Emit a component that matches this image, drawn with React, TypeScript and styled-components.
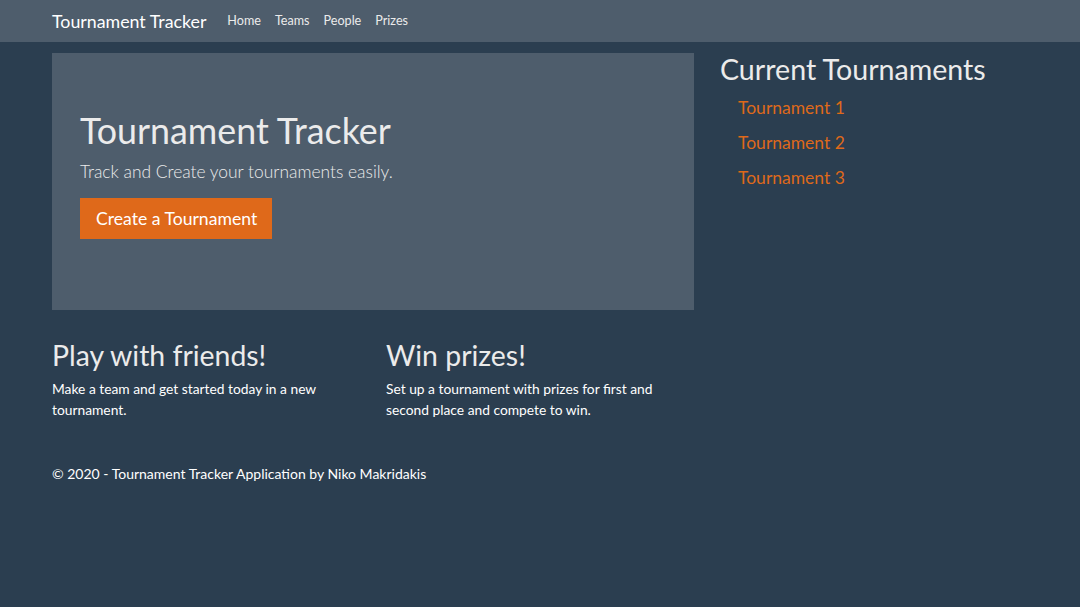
import React from 'react';
import styled, { createGlobalStyle } from 'styled-components';

const GlobalStyle = createGlobalStyle`
  html, body {
    margin: 0;
    padding: 0;
    background: #2b3e50;
    color: #ebebeb;
    font-family: Lato, "Liberation Sans", sans-serif;
    font-size: 14px;
    line-height: 1.5;
  }
  * { box-sizing: border-box; }
`;

const tournaments = ['Tournament 1', 'Tournament 2', 'Tournament 3'];

function App() {
  return (
    <>
      <GlobalStyle />
      <Navbar>
        <NavInner>
          <Brand href="#">Tournament Tracker</Brand>
          <NavLinks>
            <NavLink href="#">Home</NavLink>
            <NavLink href="#">Teams</NavLink>
            <NavLink href="#">People</NavLink>
            <NavLink href="#">Prizes</NavLink>
          </NavLinks>
        </NavInner>
      </Navbar>
      <Container>
        <TopRow>
          <Jumbotron>
            <JumboTitle>Tournament Tracker</JumboTitle>
            <Lead>Track and Create your tournaments easily.</Lead>
            <PrimaryButton>Create a Tournament</PrimaryButton>
          </Jumbotron>
          <Sidebar>
            <SideTitle>Current Tournaments</SideTitle>
            <TourList>
              {tournaments.map((t) => (
                <li key={t}>
                  <TourLink href="#">{t}</TourLink>
                </li>
              ))}
            </TourList>
          </Sidebar>
        </TopRow>
        <FeatureRow>
          <Feature>
            <FeatureTitle>Play with friends!</FeatureTitle>
            <FeatureText>Make a team and get started today in a new tournament.</FeatureText>
          </Feature>
          <Feature>
            <FeatureTitle>Win prizes!</FeatureTitle>
            <FeatureText>Set up a tournament with prizes for first and second place and compete to win.</FeatureText>
          </Feature>
          <Feature />
        </FeatureRow>
        <Footer>© 2020 - Tournament Tracker Application by Niko Makridakis</Footer>
      </Container>
    </>
  );
}

export default App;

const Navbar = styled.nav`
  background: #4e5d6c;
  height: 42px;
`;

const NavInner = styled.div`
  width: 976px;
  margin: 0 auto;
  height: 100%;
  display: flex;
  align-items: center;
`;

const Brand = styled.a`
  color: #fff;
  font-size: 17.8px;
  text-decoration: none;
  margin-right: 21px;
`;

const NavLinks = styled.div`
  display: flex;
  gap: 14px;
`;

const NavLink = styled.a`
  color: #ebebeb;
  font-size: 12.6px;
  text-decoration: none;
`;

const Container = styled.div`
  width: 976px;
  margin: 0 auto;
  padding-top: 11px;
`;

const TopRow = styled.div`
  display: flex;
`;

const Jumbotron = styled.div`
  width: 642px;
  height: 257px;
  background: #4e5d6c;
  padding: 58px 28px;
`;

const JumboTitle = styled.h1`
  margin: 0;
  font-size: 35.8px;
  font-weight: 400;
  line-height: 1.1;
  color: #ebebeb;
`;

const Lead = styled.p`
  margin: 9px 0 13px;
  font-size: 17.4px;
  font-weight: 300;
  color: #ebebeb;
`;

const PrimaryButton = styled.button`
  background: #df691a;
  border: none;
  border-radius: 0;
  color: #fff;
  font-family: inherit;
  font-size: 17.6px;
  height: 41px;
  padding: 0 15px 0 16px;
`;

const Sidebar = styled.div`
  margin-left: 26px;
`;

const SideTitle = styled.h2`
  margin: 1px 0 0;
  font-size: 28.6px;
  font-weight: 400;
  line-height: 1.1;
  color: #ebebeb;
`;

const TourList = styled.ul`
  list-style: none;
  margin: 6px 0 0;
  padding-left: 18px;

  li {
    font-size: 17.5px;
    line-height: 34.6px;
  }
`;

const TourLink = styled.a`
  color: #df691a;
  text-decoration: none;
`;

const FeatureRow = styled.div`
  display: grid;
  grid-template-columns: repeat(3, 1fr);
  gap: 30px;
  width: 972px;
  margin-top: 30px;
`;

const Feature = styled.div`
  min-width: 0;
`;

const FeatureTitle = styled.h3`
  margin: 0 0 7px;
  font-size: 28.4px;
  font-weight: 400;
  line-height: 1.1;
  color: #ebebeb;
`;

const FeatureText = styled.p`
  margin: 0;
  font-size: 13.8px;
  line-height: 21px;
  color: #fff;
`;

const Footer = styled.footer`
  margin-top: 43px;
  font-size: 14px;
  color: #fff;
`;
